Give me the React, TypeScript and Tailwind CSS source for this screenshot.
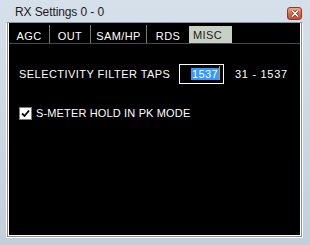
import React from "react";

const tabs = [
  { label: "AGC", w: 41 },
  { label: "OUT", w: 41 },
  { label: "SAM/HP", w: 56 },
  { label: "RDS", w: 42 },
];

export default function App() {
  return (
    <div
      className="w-[310px] h-[245px] flex flex-col bg-gradient-to-b from-[#d6e0ea] to-[#c3cfdb] overflow-hidden"
      style={{ fontFamily: '"Liberation Sans", Arial, sans-serif' }}
    >
      {/* title bar */}
      <div className="h-[22px] flex items-start shrink-0">
        <span className="pl-[15px] pt-[5px] text-[12px] leading-[14px] text-[#1b1b1b] tracking-[-0.1px]">
          RX Settings 0 - 0
        </span>
        <div className="ml-auto mr-[8px] mt-[7px] w-[15px] h-[13px] rounded-[3px] border border-[#8a3a2a] bg-gradient-to-b from-[#eda88e] via-[#dd6a48] to-[#c9482c] flex items-center justify-center">
          <svg width="8" height="7" viewBox="0 0 8 7">
            <path d="M1 0.5 L7 6.5 M7 0.5 L1 6.5" stroke="#6a3024" strokeWidth="3" />
            <path d="M1 0.5 L7 6.5 M7 0.5 L1 6.5" stroke="#ffffff" strokeWidth="1.6" />
          </svg>
        </div>
      </div>
      {/* client */}
      <div className="flex-1 ml-[6px] mr-[7px] mb-[7px] border border-white border-t-[#8899aa] flex flex-col">
        <div className="flex-1 border-l border-r border-b border-[#8c8c8c] border-t-0 flex flex-col">
          <div className="flex-1 border-l border-r border-b border-white border-t-0 bg-black flex flex-col">
            {/* tab header */}
            <div className="h-[21px] flex items-stretch border-b border-[#4a4a4a] shrink-0">
              {tabs.map((t, i) => (
                <div
                  key={t.label}
                  className={`flex items-center justify-center text-white text-[11px] tracking-[0.4px] pt-[4px] mt-[2px] ${i < 3 ? "border-r border-[#7a7a7a]" : ""}`}
                  style={{ width: t.w }}
                >
                  {t.label}
                </div>
              ))}
              <div className="w-[43px] mt-[3px] pt-[2px] bg-[#c9d1c6] text-[#1a1a1a] text-[11px] tracking-[0.4px] flex items-center pl-[4px]">
                MISC
              </div>
            </div>
            {/* content */}
            <div className="flex flex-col pl-[10px] pt-[20px]">
              <div className="flex items-center h-[20px]">
                <span className="text-white text-[11px] tracking-[0.45px] w-[160px]">
                  SELECTIVITY FILTER TAPS
                </span>
                <div className="w-[45px] h-[20px] border border-white flex items-center justify-end pr-[4px]">
                  <span className="relative bg-[#3399ff] text-white text-[11px] leading-[12px] tracking-[0.4px] px-[1px]">
                    1537
                    <span className="absolute right-[-1px] top-[-2px] w-[1px] h-[14px] bg-[#e08a2c]" />
                  </span>
                </div>
                <span className="ml-[11px] text-white text-[11px] tracking-[0.7px]">31 - 1537</span>
              </div>
              <div className="flex items-center mt-[23px] h-[13px]">
                <div className="w-[13px] h-[13px] bg-white border border-[#7a7a7a] flex items-center justify-center">
                  <svg width="9" height="9" viewBox="0 0 9 9">
                    <path d="M1 4.5 L3.5 7 L8 1.5" stroke="#000" strokeWidth="1.8" fill="none" />
                  </svg>
                </div>
                <span className="ml-[4px] text-white text-[11px] tracking-[0.15px]">
                  S-METER HOLD IN PK MODE
                </span>
              </div>
            </div>
          </div>
        </div>
      </div>
    </div>
  );
}
